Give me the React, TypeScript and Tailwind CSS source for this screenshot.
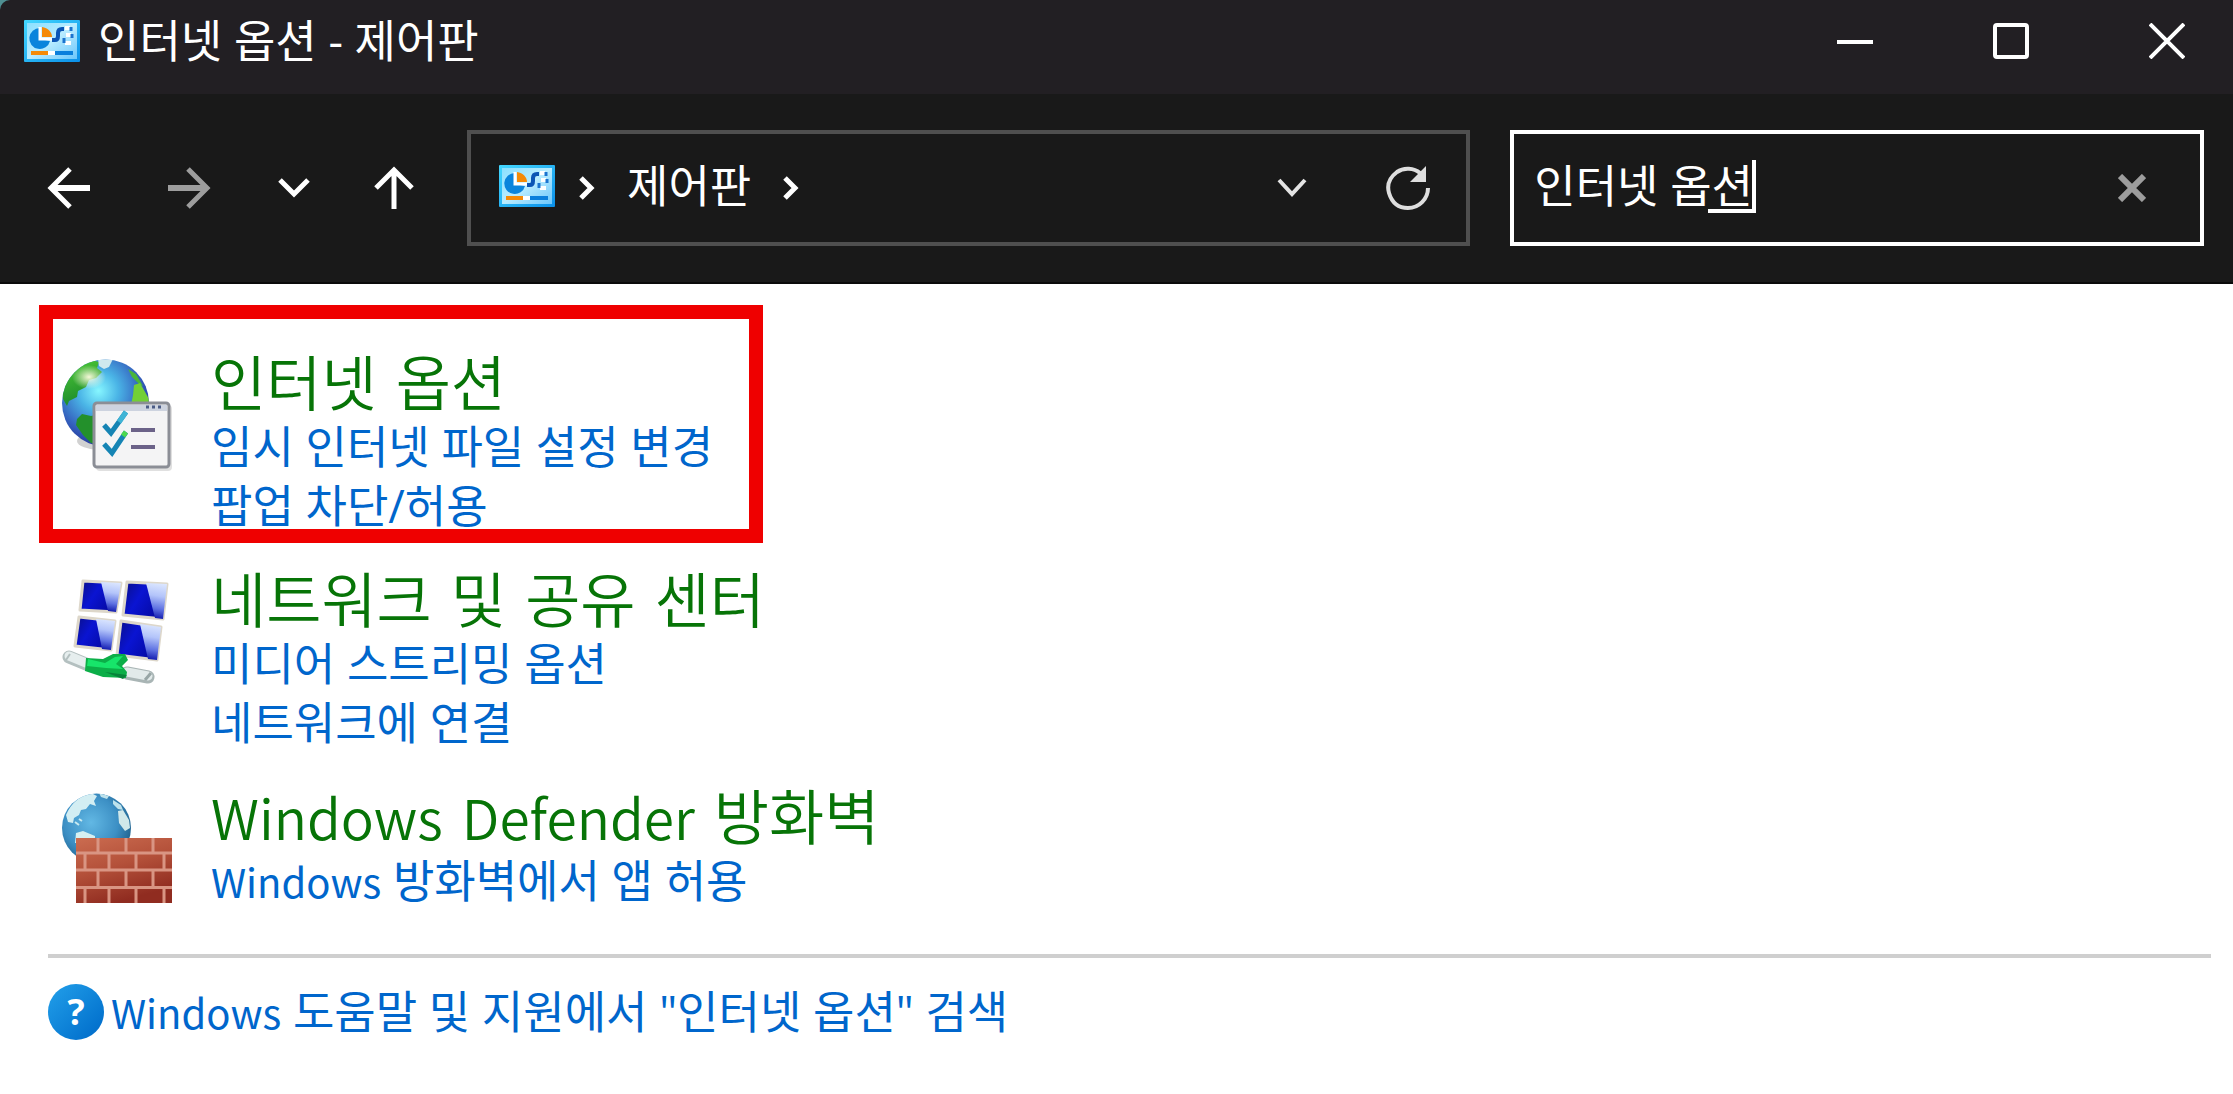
import { useState } from "react";
import type { ReactNode } from "react";

function ControlPanelIcon({ id }: { id: string }) {
  return (
    <svg viewBox="0 0 56 42" className="h-[42px] w-14 shrink-0" aria-hidden="true">
      <defs>
        <linearGradient id={`${id}-edge`} x1="0" y1="0" x2="1" y2="1">
          <stop offset="0" stopColor="#44d8ff" />
          <stop offset="1" stopColor="#0a8fe8" />
        </linearGradient>
        <linearGradient id={`${id}-fill`} x1="0" y1="0" x2="1" y2="1">
          <stop offset="0" stopColor="#8be0ff" />
          <stop offset="0.5" stopColor="#b9ecff" />
          <stop offset="1" stopColor="#6cc6fb" />
        </linearGradient>
      </defs>
      <rect width="56" height="42" rx="1" fill={`url(#${id}-edge)`} />
      <rect x="3" y="3" width="50" height="36" fill={`url(#${id}-fill)`} />
      <path d="M16 8 A10.500 10.500 0 1 0 26 21 L16 19 Z" fill="#0a84dc" />
      <path d="M16 7 V19 H28" fill="none" stroke="#fff" strokeWidth="3" />
      <path d="M18 7 C24 8 28 12 28 17 H18 Z" fill="#f58a07" />
      <path d="M28 20 H31 Q34 20 34 16 V13 Q34 9 38 9 H40" fill="none" stroke="#0b55b5" strokeWidth="4" />
      <path d="M41 8 H46 M42 15 H47 M41 23 H47" stroke="#fff" strokeWidth="4" />
      <path d="M47 7 V11 M48 14 V18 M40 18 V23" stroke="#1b74cf" strokeWidth="3" />
      <path d="M7 33 H24" stroke="#f58a07" strokeWidth="4" />
      <path d="M24 33 H31" stroke="#fff" strokeWidth="4" />
      <path d="M31 33 H49" stroke="#0a7fdc" strokeWidth="4" />
    </svg>
  );
}

function InternetOptionsIcon() {
  return (
    <svg viewBox="0 0 112 112" className="size-28" aria-hidden="true">
      <defs>
        <radialGradient id="sea" cx="0.42" cy="0.36" r="0.65">
          <stop offset="0" stopColor="#86f6ff" />
          <stop offset="0.35" stopColor="#4ab4e6" />
          <stop offset="0.75" stopColor="#3460bd" />
          <stop offset="1" stopColor="#24369a" />
        </radialGradient>
        <linearGradient id="land" x1="0" y1="0" x2="0.3" y2="1">
          <stop offset="0" stopColor="#4fcb35" />
          <stop offset="1" stopColor="#1c8a2c" />
        </linearGradient>
        <radialGradient id="glint">
          <stop offset="0" stopColor="#fffce0" stopOpacity="0.95" />
          <stop offset="1" stopColor="#fffce0" stopOpacity="0" />
        </radialGradient>
        <clipPath id="globe-clip">
          <circle cx="44.500" cy="44" r="43.500" />
        </clipPath>
      </defs>
      <ellipse cx="40" cy="82" rx="24" ry="9" fill="#000" opacity="0.18" />
      <circle cx="44.500" cy="44" r="43.500" fill="url(#sea)" />
      <g clipPath="url(#globe-clip)">
        <path d="M2 40 C0 24 14 6 30 1 L38 3 36 9 41 13 35 19 28 21 25 28 17 32 16 38 8 42 6 47 Z" fill="url(#land)" />
        <path d="M37 0 H52 L48 8 43 10 38 7 Z" fill="#cfe9ee" />
        <path d="M67 10 L75 15 82 27 78 25 71 18 Z" fill="#49b63a" />
        <path d="M73 26 L79 24 88 40 87 52 70 46 72 36 Z" fill="#72cf35" />
        <path d="M16 60 L21 55 30 57 40 55 V86 L30 84 22 76 15 66 Z" fill="#23902b" />
        <ellipse cx="28" cy="18" rx="17" ry="12" fill="url(#glint)" />
      </g>
      <rect x="35" y="46" width="76" height="66" rx="4" fill="#000" opacity="0.12" />
      <rect x="33" y="44" width="75" height="64" rx="3" fill="#f4f4f5" stroke="#8b8e96" strokeWidth="3" />
      <rect x="35" y="46" width="71" height="6" fill="#cdd3df" />
      <path d="M85 48 h3 M91 48 h3 M97 48 h3" stroke="#4c5c86" strokeWidth="3" />
      <path d="M43 66 L50 74 65 53" fill="none" stroke="#1584b4" strokeWidth="5" />
      <path d="M58 63 L65 53" stroke="#3fb4d6" strokeWidth="5" />
      <path d="M43 85 L51 94 65 73" fill="none" stroke="#1584b4" strokeWidth="5" />
      <path d="M62 77 L65 73" stroke="#4bd84f" strokeWidth="5" />
      <path d="M70 71 H94 M70 88 H94" stroke="#6b6288" strokeWidth="4" />
    </svg>
  );
}

function NetworkIcon() {
  const panes = [
    { base: "22,5 60,7 55,36 19,34", shine: "40,6 60,7 55,36 47,35" },
    { base: "66,6 106,8 102,43 62,39", shine: "85,7 106,8 102,43 94,42" },
    { base: "18,41 54,45 50,74 14,70", shine: "35,43 54,45 50,74 41,73" },
    { base: "60,45 100,51 96,84 56,79", shine: "79,48 100,51 96,84 87,83" },
  ];
  return (
    <svg viewBox="0 0 112 112" className="size-28" aria-hidden="true">
      <defs>
        <linearGradient id="pane" x1="0" y1="0" x2="1" y2="0.5">
          <stop offset="0" stopColor="#0a0f86" />
          <stop offset="0.45" stopColor="#0a14d2" />
          <stop offset="1" stopColor="#0509a0" />
        </linearGradient>
        <linearGradient id="pane-shine" x1="0.5" y1="0" x2="0.4" y2="1">
          <stop offset="0" stopColor="#dbe6ff" />
          <stop offset="0.35" stopColor="#b3c4fa" />
          <stop offset="0.7" stopColor="#5f72e2" />
          <stop offset="1" stopColor="#0c14aa" />
        </linearGradient>
      </defs>
      {panes.map((pane) => (
        <g key={pane.base}>
          <polygon points={pane.base} fill="url(#pane)" stroke="#ddd7ca" strokeWidth="3" strokeLinejoin="round" />
          <polygon points={pane.shine} fill="url(#pane-shine)" />
        </g>
      ))}
      <path d="M8 81 L25 88" stroke="#b4c0c0" strokeWidth="13" strokeLinecap="round" />
      <path d="M8 80 L25 87" stroke="#e6eeee" strokeWidth="9" strokeLinecap="round" />
      <path d="M5 84 L9 78" stroke="#b4c0c0" strokeWidth="2" />
      <path d="M66 97 L87 101" stroke="#a9b5b5" strokeWidth="13" strokeLinecap="round" />
      <path d="M66 96 L87 100" stroke="#e2eaea" strokeWidth="9" strokeLinecap="round" />
      <path d="M84 104 L90 97" stroke="#98a6a6" strokeWidth="3" />
      <path d="M25 82 L42 83 52 78 64 78 67 84 61 90 66 96 65 102 42 101 24 95 Z" fill="#0cae48" />
      <path d="M27 83 L44 87 54 81 62 80 55 88 62 93 45 92 26 90 Z" fill="#17e56a" />
      <path d="M44 96 L66 99 62 103 Z" fill="#07833a" />
    </svg>
  );
}

function FirewallIcon() {
  return (
    <svg viewBox="0 0 112 112" className="size-28" aria-hidden="true">
      <defs>
        <radialGradient id="fw-sea" cx="0.42" cy="0.42" r="0.65">
          <stop offset="0" stopColor="#62b8e4" />
          <stop offset="0.6" stopColor="#3c8fc4" />
          <stop offset="1" stopColor="#1d5c86" />
        </radialGradient>
        <linearGradient id="bricks" x1="0" y1="0" x2="0.4" y2="1">
          <stop offset="0" stopColor="#cb6c50" />
          <stop offset="0.5" stopColor="#b4513a" />
          <stop offset="1" stopColor="#902c20" />
        </linearGradient>
        <clipPath id="fw-clip">
          <circle cx="35.500" cy="35" r="34.500" />
        </clipPath>
      </defs>
      <circle cx="35.500" cy="35" r="34.500" fill="url(#fw-sea)" />
      <g clipPath="url(#fw-clip)">
        <path d="M5 22 C10 10 20 2 30 0 L36 3 33 8 35 13 29 11 25 16 20 17 18 22 13 25 12 30 7 29 Z" fill="#d3eef3" />
        <path d="M38 0 L48 3 46 6 40 4 Z M52 7 L60 12 62 17 57 16 52 11 Z" fill="#bde2ec" />
        <path d="M57 18 L62 17 68 27 69 35 64 38 58 30 Z" fill="#d0e8ea" />
        <path d="M15 40 L22 38 34 43 V50 H14 Z" fill="#d5f0f2" />
        <path d="M14 29 l4 3 M18 26 l3 2" stroke="#c7e9f0" strokeWidth="2" />
      </g>
      <rect x="15" y="45" width="96" height="65" fill="url(#bricks)" />
      <path
        d="M15 60 H111 M15 77 H111 M15 94.500 H111 M37 45 V60 M65 45 V60 M92 45 V60 M24 60 V77 M48 60 V77 M75 60 V77 M103 60 V77 M37 77 V94 M65 77 V94 M92 77 V94 M24 95 V110 M48 95 V110 M75 95 V110 M103 95 V110"
        stroke="#d99583"
        strokeWidth="3"
      />
    </svg>
  );
}

type Entry = { title: string; links: string[]; icon: ReactNode; marked?: boolean };

const entries: Entry[] = [
  {
    title: "인터넷 옵션",
    links: ["임시 인터넷 파일 설정 변경", "팝업 차단/허용"],
    icon: <InternetOptionsIcon />,
    marked: true,
  },
  {
    title: "네트워크 및 공유 센터",
    links: ["미디어 스트리밍 옵션", "네트워크에 연결"],
    icon: <NetworkIcon />,
  },
  {
    title: "Windows Defender 방화벽",
    links: ["Windows 방화벽에서 앱 허용"],
    icon: <FirewallIcon />,
  },
];

/* Latin words are set a little smaller than the Hangul around them. */
function Mixed({ text, latin }: { text: string; latin: string }) {
  return (
    <>
      {text.split(/([A-Za-z]+)/).map((part, index) =>
        index % 2 ? (
          <span key={index} className={`font-['Noto_Sans_CJK_KR',sans-serif] leading-none ${latin}`}>
            {part}
          </span>
        ) : (
          part
        ),
      )}
    </>
  );
}

function TitleBar() {
  const button = "flex h-full w-[132px] items-center justify-center pb-3";
  return (
    <header className="flex h-[94px] items-center justify-between rounded-tl-[10px] bg-[#221f23] text-white">
      <div className="flex items-center gap-[18px] pb-3 pl-6">
        <ControlPanelIcon id="title" />
        <h1 className="text-[45px] leading-[60px]">인터넷 옵션 - 제어판</h1>
      </div>
      <div className="flex h-full gap-6">
        <button type="button" aria-label="최소화" className={button}>
          <svg viewBox="0 0 36 36" className="size-9" fill="none" stroke="currentColor" strokeWidth="4">
            <path d="M0 19 H36" />
          </svg>
        </button>
        <button type="button" aria-label="최대화" className={button}>
          <svg viewBox="0 0 36 36" className="size-9" fill="none" stroke="currentColor" strokeWidth="4">
            <rect x="2" y="2" width="32" height="32" rx="2" />
          </svg>
        </button>
        <button type="button" aria-label="닫기" className={button}>
          <svg viewBox="0 0 36 36" className="size-9" fill="none" stroke="currentColor" strokeWidth="4">
            <path d="M1 1 L35 35 M35 1 L1 35" />
          </svg>
        </button>
      </div>
    </header>
  );
}

function Crumb() {
  return (
    <svg viewBox="0 0 16 24" className="mt-1 h-6 w-4" fill="none" stroke="currentColor" strokeWidth="5" aria-hidden="true">
      <path d="M2 2 L12 12 L2 22" />
    </svg>
  );
}

function Toolbar() {
  const [query, setQuery] = useState("인터넷 옵션");
  const nav = "flex h-[116px] items-center justify-center";
  return (
    <nav className="flex h-[190px] items-center border-b-2 border-[#0a0a0a] bg-[#191919] pr-[29px] pl-[9px] text-white">
      <button type="button" aria-label="뒤로" className={`${nav} w-[120px]`}>
        <svg viewBox="0 0 44 44" className="size-11" fill="none" stroke="currentColor" strokeWidth="5">
          <path d="M43 22 H4" strokeWidth="6" />
          <path d="M23 3 L4 22 L23 41" />
        </svg>
      </button>
      <button type="button" aria-label="앞으로" className={`${nav} w-[120px] text-[#9d9d9d]`}>
        <svg viewBox="0 0 44 44" className="size-11" fill="none" stroke="currentColor" strokeWidth="5">
          <path d="M1 22 H40" strokeWidth="6" />
          <path d="M21 3 L40 22 L21 41" />
        </svg>
      </button>
      <button type="button" aria-label="최근 위치" className={`${nav} w-[90px]`}>
        <svg viewBox="0 0 32 20" className="h-5 w-8" fill="none" stroke="currentColor" strokeWidth="5">
          <path d="M2 2 L16 16 L30 2" />
        </svg>
      </button>
      <button type="button" aria-label="위로" className={`${nav} w-[110px]`}>
        <svg viewBox="0 0 40 44" className="h-11 w-10" fill="none" stroke="currentColor" strokeWidth="5">
          <path d="M20 43 V4 M2 22 L20 4 L38 22" />
        </svg>
      </button>
      <div className="ml-[18px] flex h-[116px] min-w-0 flex-[1007] items-center border-4 border-[#4f4f4f] pb-1 pl-7">
        <ControlPanelIcon id="address" />
        <span className="ml-6">
          <Crumb />
        </span>
        <button type="button" className="mx-8 text-[45px] leading-[60px]">
          제어판
        </button>
        <Crumb />
        <button type="button" aria-label="이전 위치" className="ml-auto flex h-full w-[116px] items-center justify-center pt-1">
          <svg viewBox="0 0 30 20" className="h-5 w-[30px]" fill="none" stroke="#e4e4e4" strokeWidth="4">
            <path d="M2 2 L15 16 L28 2" />
          </svg>
        </button>
        <button type="button" aria-label="새로 고침" className="flex h-full w-[116px] items-center justify-center pt-1">
          <svg viewBox="0 0 44 44" className="size-11" fill="none" stroke="#dedede" strokeWidth="4">
            <path d="M34 7 C28 2 18 1 11 6 C3 12 1 20 3 27 C6 37 13 42 22 42 C33 42 42 33 42 22" />
            <path d="M24 16 H40 V0 Z" fill="#dedede" stroke="none" />
          </svg>
        </button>
      </div>
      <form
        role="search"
        onSubmit={(event) => event.preventDefault()}
        className="relative ml-10 flex h-[116px] min-w-0 flex-[693] items-center border-4 border-white pl-5"
      >
        <input
          type="text"
          aria-label="제어판 검색"
          value={query}
          onChange={(event) => setQuery(event.target.value)}
          className="min-w-0 flex-1 bg-transparent pb-1 text-[45px] leading-[60px] caret-white outline-none"
        />
        <span aria-hidden="true" className="pointer-events-none absolute top-[26px] left-[194px] h-[53px] w-12 border-r-4 border-b-4 border-white" />
        <button type="button" aria-label="지우기" onClick={() => setQuery("")} className="flex h-full w-[136px] items-center justify-center">
          <svg viewBox="0 0 28 28" className="size-7" fill="none" stroke="#9d9d9d" strokeWidth="6">
            <path d="M2 2 L26 26 M26 2 L2 26" />
          </svg>
        </button>
      </form>
    </nav>
  );
}

function Result({ entry }: { entry: Entry }) {
  return (
    <li className="relative flex w-fit items-start gap-[38px]">
      <div className="mt-1.5 shrink-0">{entry.icon}</div>
      <div>
        <h2 className="font-['DejaVu_Sans','Noto_Sans_CJK_KR',sans-serif] text-[60px] leading-[64px] font-[350] text-[#077407]">
          <a href="#" className="block">
            <Mixed text={entry.title} latin="text-[55px]" />
          </a>
        </h2>
        <ul className="text-[45px] leading-[59px] text-[#0066cc]">
          {entry.links.map((link) => (
            <li key={link}>
              <a href="#" className="block">
                <Mixed text={link} latin="text-[40px]" />
              </a>
            </li>
          ))}
        </ul>
      </div>
      {entry.marked && (
        <div className="pointer-events-none absolute -top-12 -right-[50px] -bottom-2 -left-[22px] border-[14px] border-[#ef0000]" />
      )}
    </li>
  );
}

export default function App() {
  return (
    <div className="min-h-screen bg-white font-['Open_Sans','Noto_Sans_CJK_KR',sans-serif]">
      <div className="bg-[#4f8f92]">
        <TitleBar />
        <Toolbar />
      </div>
      <main className="pt-[69px]">
        <ul className="flex flex-col gap-[35px] pl-[61px]">
          {entries.map((entry) => (
            <Result key={entry.title} entry={entry} />
          ))}
        </ul>
        <footer className="mt-11 mr-[22px] ml-12 border-t-4 border-[#cfcfcf] pt-6">
          <a href="#" className="flex items-center gap-[7px] text-[45px] leading-[60px] text-[#0066cc]">
            <span
              aria-hidden="true"
              className="flex size-14 shrink-0 items-center justify-center rounded-full bg-linear-to-br from-[#22a0ea] to-[#0069c8] text-4xl font-bold text-white"
            >
              ?
            </span>
            <span>
              <Mixed text={'Windows 도움말 및 지원에서 "인터넷 옵션" 검색'} latin="text-[40px]" />
            </span>
          </a>
        </footer>
      </main>
    </div>
  );
}
